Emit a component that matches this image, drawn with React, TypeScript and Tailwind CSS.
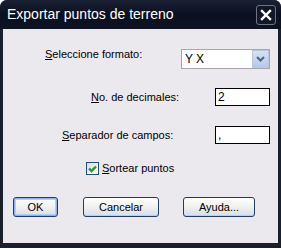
import { useState } from "react";

const font = { fontFamily: '"Liberation Sans", Arial, sans-serif' };

const Btn = ({ label, w, isDefault }: { label: string; w: string; isDefault?: boolean }) => (
    <button
        className={`${w} h-[20px] rounded-[3px] border border-[#1d3d6e] bg-gradient-to-b from-[#ffffff] via-[#f1f1ee] to-[#d6dceb] text-[11px] text-black leading-none ${isDefault ? "shadow-[inset_0_0_0_1px_#8fb1ec,inset_0_0_0_2px_#b4cdf4]" : "shadow-[inset_0_-1px_0_#c3cde0]"}`}
    >
        {label}
    </button>
);

const App = () => {
    const [sort, setSort] = useState(true);
    return (
        <div className="w-[281px] h-[248px] bg-white" style={font}>
            <div className="w-full h-full flex flex-col rounded-t-[7px] bg-[#1a1f2c] overflow-hidden">
                {/* title bar */}
                <div className="h-[29px] flex items-center justify-between pl-[7px] pr-[5px] bg-gradient-to-b from-[#1a2133] via-[#0b1020] to-[#0d1322]">
                    <span className="text-[14px] text-white">Exportar puntos de terreno</span>
                    <div className="w-[20px] h-[20px] rounded-[3px] border border-[#6b7385] bg-[#121826] flex items-center justify-center">
                        <svg width="12" height="12" viewBox="0 0 12 12">
                            <path d="M2 2 L10 10 M10 2 L2 10" stroke="#fff" strokeWidth="2.4" strokeLinecap="square" />
                        </svg>
                    </div>
                </div>

                {/* body */}
                <div className="flex-1 mx-[3px] mb-[5px] bg-[#ebe9ed] flex flex-col text-[11px] text-black">
                    <div className="mt-[20px] h-[20px] flex items-center justify-between pl-[42px] pr-[8px]">
                        <span className="mb-[9px]"><u>S</u>eleccione formato:</span>
                        <div className="w-[89px] h-[20px] border border-[#a7a6aa] bg-white flex items-center">
                            <span className="flex-1 pl-[3px] text-[12px]">Y X</span>
                            <div className="w-[17px] h-[18px] border border-[#b9c6df] bg-gradient-to-b from-[#d6e1f5] to-[#b7c8e8] flex items-center justify-center">
                                <svg width="9" height="6" viewBox="0 0 9 6">
                                    <path d="M1 1 L4.5 4.5 L8 1" stroke="#4d6185" strokeWidth="2" fill="none" />
                                </svg>
                            </div>
                        </div>
                    </div>

                    <div className="mt-[19px] h-[18px] flex items-center justify-between pl-[88px] pr-[8px]">
                        <span><u>N</u>o. de decimales:</span>
                        <div className="w-[55px] h-[18px] border border-black bg-white pl-[2px] text-[12px] leading-[16px]">2</div>
                    </div>

                    <div className="mt-[20px] h-[18px] flex items-center justify-between pl-[59px] pr-[8px]">
                        <span><u>S</u>eparador de campos:</span>
                        <div className="w-[55px] h-[18px] border border-black bg-white pl-[2px] text-[12px] leading-[16px]">,</div>
                    </div>

                    <label className="mt-[18px] h-[13px] flex items-center pl-[83px] gap-[3px]">
                        <span
                            onClick={() => setSort(!sort)}
                            className="w-[13px] h-[13px] border border-[#1c5180] bg-gradient-to-br from-[#dcdcd7] to-[#ffffff] flex items-center justify-center"
                        >
                            {sort && (
                                <svg width="9" height="8" viewBox="0 0 9 8">
                                    <path d="M1 3.5 L3.5 6 L8 1.5" stroke="#21a121" strokeWidth="2.4" fill="none" />
                                </svg>
                            )}
                        </span>
                        <span><u>S</u>ortear puntos</span>
                    </label>

                    <div className="mt-[22px] flex items-center pl-[10px]">
                        <Btn label="OK" w="w-[45px]" isDefault />
                        <div className="ml-[25px]"><Btn label="Cancelar" w="w-[76px]" /></div>
                        <div className="ml-[24px]"><Btn label="Ayuda..." w="w-[72px]" /></div>
                    </div>
                </div>
            </div>
        </div>
    );
};

export default App;
